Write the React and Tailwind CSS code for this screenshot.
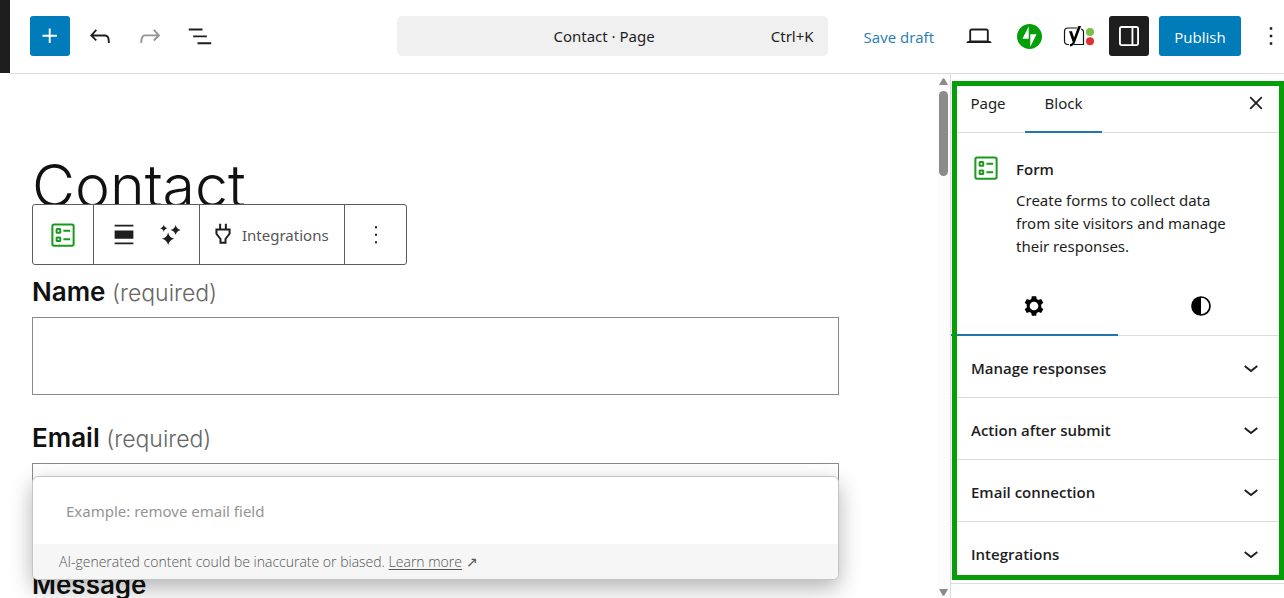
const Svg = ({ children, size = 30, className = "" }) => (
  <svg width={size} height={size} viewBox="0 0 24 24" fill="currentColor" aria-hidden="true" className={className}>
    {children}
  </svg>
);

const PlusIcon = () => (
  <Svg><path d="M11 12.5V17.5H12.5V12.5H17.5V11H12.5V6H11V11H6V12.5H11Z" /></Svg>
);
const UndoIcon = () => (
  <Svg><path d="M18.3 11.7c-.6-.6-1.4-.9-2.3-.9H6.7l2.9-3.3-1.1-1-4.5 5L8.500 16l1-1-2.700-2.700H16c.5 0 .9.2 1.300.5 1 1 1 3.400 1 4.500v.3h1.500v-.2c0-1.500 0-4.300-1.500-5.700z" /></Svg>
);
const RedoIcon = () => (
  <Svg><path d="M15.600 6.500l-1.100 1 2.900 3.300H8c-.9 0-1.700.3-2.300.9-1.400 1.500-1.400 4.200-1.400 5.600v.2h1.500v-.3c0-1.100 0-3.500 1-4.500.3-.3.7-.5 1.300-.5h9.200L14.500 15l1.100 1.100 4.600-4.600-4.600-5z" /></Svg>
);
const ListViewIcon = () => (
  <Svg><path d="M3 6h11v1.500H3V6Zm3.500 5.500h11V13h-11v-1.500ZM21 17H10v1.500h11V17Z" /></Svg>
);
const LaptopIcon = () => (
  <Svg><path d="M20.500 16h-.7V8c0-1.100-.9-2-2-2H6.200c-1.100 0-2 .9-2 2v8h-.7c-.8 0-1.500.7-1.500 1.500h20c0-.8-.7-1.500-1.500-1.500zM5.700 8c0-.3.2-.5.500-.5h11.600c.3 0 .5.2.5.5v7.600H5.700V8z" /></Svg>
);
const DotsIcon = () => (
  <Svg><path d="M13 19h-2v-2h2v2zm0-6h-2v-2h2v2zm0-6h-2V5h2v2z" /></Svg>
);
const SmallDotsIcon = () => (
  <Svg><path d="M12.800 18.600h-1.600V17h1.600zm0-6h-1.600V11h1.600zm0-6h-1.600V5h1.600z" /></Svg>
);
const DrawerIcon = () => (
  <Svg><path fillRule="evenodd" clipRule="evenodd" d="M18 4H6c-1.100 0-2 .9-2 2v12c0 1.100.9 2 2 2h12c1.100 0 2-.9 2-2V6c0-1.100-.9-2-2-2zm-4 14.500H6c-.3 0-.5-.2-.5-.5V6c0-.3.2-.5.500-.5h8v13zm4.500-.5c0 .3-.2.5-.5.5h-2.500v-13H18c.3 0 .5.2.5.500v12z" /></Svg>
);
const JetpackIcon = () => (
  <svg width="25" height="25" viewBox="0 0 32 32" aria-hidden="true">
    <circle cx="16" cy="16" r="16" fill="#069e08" />
    <path fill="#fff" d="M15 19H7l8-16v16zM17 29V13h8l-8 16z" />
  </svg>
);
const YoastIcon = () => (
  <svg width="32" height="24" viewBox="0 0 32 24" aria-hidden="true">
    <path d="M14 4H5a3.500 3.500 0 0 0-3.500 3.500v9.500a3.500 3.500 0 0 0 3.500 3.500h1M18 5a3 3 0 0 1 2.500 3v12.500H11" fill="none" stroke="#111" strokeWidth="1.200" />
    <path d="M6 7.200h2.900l2.200 6.300L15.200 2h2.900l-6 16c-1.100 3-2.500 4.200-5.100 4.400v-2.300c1.500-.2 2.200-.8 2.700-2.200z" fill="#000" />
    <circle cx="27" cy="8" r="4" fill="#77c043" />
    <circle cx="27" cy="17.300" r="4" fill="#dc3232" />
  </svg>
);
const FormIcon = () => (
  <svg width="30" height="30" viewBox="0 0 24 24" fill="none" stroke="#1a9a1c" strokeWidth="1.600" aria-hidden="true">
    <rect x="3.500" y="3.500" width="17" height="17" rx="1.400" />
    <rect x="6.900" y="7.200" width="2.900" height="2.900" rx=".4" />
    <rect x="6.900" y="13.900" width="2.900" height="2.900" rx=".4" />
    <path d="M12.300 8.600h5.400M12.300 15.400h5.400" />
  </svg>
);
const AlignIcon = () => (
  <Svg><path d="M4.500 3.800h15v1.400h-15zM4.500 8.300h15v6.600h-15zM4.500 18h15v1.400h-15z" /></Svg>
);
const SparkIcon = () => (
  <Svg>
    <path d="M10.500 10q.9 4.100 5 5-4.100.9-5 5-.9-4.100-5-5 4.100-.9 5-5z" />
    <path d="M16.500 4q.7 3.300 4 4-3.300.7-4 4-.7-3.300-4-4 3.300-.7 4-4z" />
    <path d="M7 3.500q.5 2.500 3 3-2.500.5-3 3-.5-2.500-3-3 2.500-.5 3-3z" />
  </Svg>
);
const PlugIcon = () => (
  <svg width="30" height="30" viewBox="0 0 24 24" fill="none" stroke="currentColor" strokeWidth="1.600" aria-hidden="true">
    <path d="M9.700 3V7.500M14.300 3V7.500M6.750 7.500h10.500v3.500L14 15.200v3h-4v-3L6.750 11z" />
  </svg>
);
const GearIcon = () => (
  <Svg size={26}>
    <path fillRule="evenodd" d="M10 3h4l.5 2.500 1.700 1 2.400-.9 2 3.500-1.900 1.600v2.600l1.900 1.600-2 3.500-2.400-.9-1.700 1L14 21h-4l-.5-2.500-1.700-1-2.400.9-2-3.500 1.900-1.600v-2.600L3.400 9.100l2-3.500 2.400.9 1.700-1zM12 8a4 4 0 1 0 0 8 4 4 0 0 0 0-8z" />
  </Svg>
);
const ContrastIcon = () => (
  <svg width="20" height="20" viewBox="0 0 20 20" aria-hidden="true">
    <circle cx="10" cy="10" r="9" fill="none" stroke="#000" strokeWidth="1.700" />
    <path d="M10 1a9 9 0 0 0 0 18z" fill="#000" />
  </svg>
);
const CloseIcon = () => (
  <Svg size={28}><path d="m13.060 12 4.440-4.440-1.060-1.060L12 10.940 7.560 6.500 6.500 7.560 10.940 12 6.500 16.440l1.060 1.060L12 13.060l4.440 4.440 1.060-1.060z" /></Svg>
);
const ChevronIcon = () => (
  <Svg><path d="M17.500 10.200 12 14.600l-5.500-4.400.9-1.200L12 12.600 16.600 9z" /></Svg>
);

const ToolButton = ({ label, className = "", children }) => (
  <button type="button" aria-label={label} className={`flex size-10 shrink-0 items-center justify-center ${className}`}>
    {children}
  </button>
);

function Header() {
  return (
    <header className="flex h-[74px] shrink-0 overflow-hidden">
      <div className="h-[73px] w-[10px] shrink-0 bg-[#1e1e1e]" />
      <div className="flex min-w-0 flex-1 items-center border-b border-[#dcdcdc] pb-px pl-5">
        <div className="flex items-center gap-[10px]">
          <ToolButton label="Add block" className="rounded-[3px] bg-[#007cba] text-white"><PlusIcon /></ToolButton>
          <ToolButton label="Undo"><UndoIcon /></ToolButton>
          <ToolButton label="Redo" className="text-[#949494]"><RedoIcon /></ToolButton>
          <ToolButton label="Document overview"><ListViewIcon /></ToolButton>
        </div>
        <button type="button" className="mr-9 ml-auto grid h-10 w-[431px] grid-cols-[1fr_auto_1fr] items-center rounded-[5px] bg-[#f0f0f0] px-[14px] font-['Noto_Sans',sans-serif]">
          <span />
          <span className="pr-4">Contact · Page</span>
          <span className="text-right">Ctrl+K</span>
        </button>
        <div className="flex items-center">
          <button type="button" className="mr-[25px] pt-[2px] whitespace-nowrap text-[#1f7cb5]">Save draft</button>
          <div className="flex items-center gap-[10px]">
            <ToolButton label="View"><LaptopIcon /></ToolButton>
            <ToolButton label="Jetpack"><JetpackIcon /></ToolButton>
            <ToolButton label="Yoast SEO"><YoastIcon /></ToolButton>
            <ToolButton label="Settings" className="rounded-[3px] bg-[#1e1e1e] text-white"><DrawerIcon /></ToolButton>
            <button type="button" className="h-10 w-[82px] rounded-[3px] bg-[#007cba] pt-[2px] text-white">Publish</button>
          </div>
          <button type="button" aria-label="Options" className="-mr-[2px] ml-[15px] flex h-10 items-center"><DotsIcon /></button>
        </div>
      </div>
    </header>
  );
}

function BlockToolbar() {
  return (
    <div role="toolbar" aria-label="Block tools" className="absolute top-[130px] left-8 flex h-[61px] w-[375px] divide-x divide-[#5c5c5c] rounded-[3px] border border-[#5c5c5c] bg-white">
      <button type="button" aria-label="Form" className="flex w-[61px] items-center justify-center"><FormIcon /></button>
      <div className="flex w-[106px] items-center justify-center gap-4">
        <button type="button" aria-label="Align"><AlignIcon /></button>
        <button type="button" aria-label="AI assistant"><SparkIcon /></button>
      </div>
      <button type="button" className="flex w-[145px] items-center gap-1 pt-px pl-2 font-['Noto_Sans',sans-serif] text-[#555]"><span className="text-[#1e1e1e]"><PlugIcon /></span>Integrations</button>
      <button type="button" aria-label="More" className="flex flex-1 items-center justify-center"><SmallDotsIcon /></button>
    </div>
  );
}

function Field({ id, label }) {
  return (
    <div className="mb-[30px]">
      <label htmlFor={id} className="block h-[38px] font-['Inter'] text-[26px] leading-[26px] font-semibold text-[#111]">
        {label} <span className="text-[23px] font-light text-[#666]">(required)</span>
      </label>
      <input id={id} type="text" className="block h-[78px] w-full border border-[#8a8a8a] bg-white px-4" />
    </div>
  );
}

function Canvas() {
  return (
    <main className="relative min-w-0 flex-1 overflow-hidden">
      <div className="pt-[80px] pr-[98px] pl-8">
        <h1 className="h-[125px] font-['Inter'] text-[59px] leading-[64px] font-light text-[#111]">Contact</h1>
        <Field id="name" label="Name" />
        <Field id="email" label="Email" />
        <label htmlFor="message" className="block font-['Inter'] text-[26px] leading-[28px] font-semibold text-[#111]">Message</label>
        <textarea id="message" className="w-full border border-[#8a8a8a]" />
      </div>
      <BlockToolbar />
      <div className="absolute top-[402px] right-[98px] left-8 rounded-[6px] border border-[#c4c4c4] bg-white shadow-[0_8px_22px_rgba(0,0,0,0.3)]">
        <input aria-label="Ask AI to edit the form" placeholder="Example: remove email field" className="block h-[67px] w-full bg-transparent px-[33px] font-['Noto_Sans',sans-serif] placeholder:text-[#949494]" />
        <p className="h-[35px] rounded-b-[5px] bg-[#f6f6f6] pl-[26px] text-[14px] leading-[35px] font-light text-[#555]">
          AI-generated content could be inaccurate or biased. <a href="#guidelines" className="underline underline-offset-2">Learn more</a> ↗
        </p>
      </div>
    </main>
  );
}

function Scrollbar() {
  return (
    <div aria-hidden="true" className="flex w-[13px] shrink-0 flex-col items-center bg-[#fcfcfc] pt-1 pb-[2px]">
      <svg width="9" height="7" viewBox="0 0 9 7"><path d="M0 7 3.500 .8q1-1.200 2 0L9 7z" fill="#8b8b8b" /></svg>
      <div className="mt-[6px] h-[85px] w-[9px] rounded-full bg-[#8b8b8b]" />
      <svg className="mt-auto" width="9" height="7" viewBox="0 0 9 7"><path d="M0 0 3.500 6.200q1 1.200 2 0L9 0z" fill="#8b8b8b" /></svg>
    </div>
  );
}

const panels = ["Manage responses", "Action after submit", "Email connection", "Integrations"];

function Sidebar() {
  return (
    <aside className="relative w-[334px] shrink-0 overflow-hidden border-l border-[#dcdcdc]">
      <div role="tablist" className="flex h-[59px] border-b border-[#dcdcdc] font-['Noto_Sans',sans-serif]">
        <button type="button" role="tab" aria-selected="false" className="w-[74px]">Page</button>
        <button type="button" role="tab" aria-selected="true" className="h-[59px] w-[77px] border-y-2 border-t-transparent border-b-[#1f78ad]">Block</button>
        <button type="button" aria-label="Close settings" className="mr-[14px] ml-auto"><CloseIcon /></button>
      </div>
      <section className="flex h-[142px] gap-[15px] pt-5 pl-5">
        <div><FormIcon /></div>
        <div className="w-[225px] pt-1">
          <h2 className="leading-[24px] font-semibold">Form</h2>
          <p className="pt-2 font-['Noto_Sans',sans-serif] leading-[23px]">Create forms to collect data from site visitors and manage their responses.</p>
        </div>
      </section>
      <div role="tablist" className="flex h-[61px] border-b border-[#dcdcdc]">
        <button type="button" role="tab" aria-selected="true" aria-label="Settings" className="flex h-[61px] flex-1 items-center justify-center border-y-2 border-t-transparent border-b-[#1f78ad] text-black"><GearIcon /></button>
        <button type="button" role="tab" aria-selected="false" aria-label="Styles" className="flex h-[61px] flex-1 items-center justify-center"><ContrastIcon /></button>
      </div>
      {panels.map((name) => (
        <h2 key={name} className="border-b border-[#dcdcdc]">
          <button type="button" aria-expanded="false" className="flex h-[61px] w-full items-center justify-between pt-1 pr-[18px] pl-5 font-semibold">
            {name}
            <ChevronIcon />
          </button>
        </h2>
      ))}
      <div aria-hidden="true" className="pointer-events-none absolute top-[7px] right-0 left-px h-[499px] border-[5px] border-[#069e08]" />
    </aside>
  );
}

export default function App() {
  return (
    <div className="flex h-screen flex-col overflow-hidden bg-white font-['Open_Sans','Noto_Sans',sans-serif] text-[15px] text-[#1e1e1e]">
      <Header />
      <div className="flex min-h-0 flex-1">
        <Canvas />
        <Scrollbar />
        <Sidebar />
      </div>
    </div>
  );
}
